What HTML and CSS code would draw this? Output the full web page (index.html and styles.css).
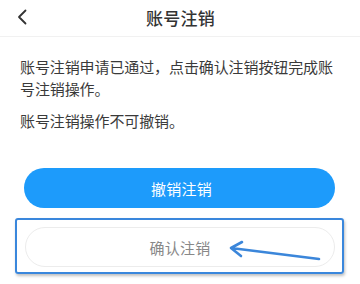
FILE: index.html
```html
<!DOCTYPE html>
<html lang="zh-CN">
<head>
<meta charset="utf-8">
<link rel="stylesheet" href="styles.css">
</head>
<body>
<div class="page">
  <header class="header">
    <svg class="back" width="10" height="16" viewBox="0 0 10 16"><path d="M8.5 1.5 L2 8 L8.5 14.5" fill="none" stroke="#333" stroke-width="1.8" stroke-linecap="round" stroke-linejoin="round"/></svg>
    <h1 class="title">账号注销</h1>
  </header>
  <main class="content">
    <p class="text">账号注销申请已通过，点击确认注销按钮完成账号注销操作。</p>
    <p class="text text-second">账号注销操作不可撤销。</p>
  </main>
  <div class="actions">
    <button class="btn btn-primary">撤销注销</button>
    <button class="btn btn-secondary">确认注销</button>
    <div class="highlight"></div>
    <svg class="arrow" width="100" height="24" viewBox="0 0 100 24">
      <path d="M90 19 L2 8 M13 2 L2 8 L12 16" fill="none" stroke="#3b86da" stroke-width="2.6" stroke-linecap="round" stroke-linejoin="round"/>
    </svg>
  </div>
</div>
</body>
</html>
```
FILE: styles.css
```css
html, body {
  margin: 0;
  padding: 0;
  background: #ffffff;
}
body {
  font-family: "Noto Sans CJK SC", "Noto Sans", sans-serif;
  color: #333333;
}
.page {
  width: 360px;
  height: 284px;
  overflow: hidden;
  position: relative;
}
.header {
  height: 36px;
  border-bottom: 1px solid #f1f1f1;
  display: flex;
  align-items: center;
  justify-content: center;
  position: relative;
}
.back {
  position: absolute;
  left: 17px;
  top: 9px;
}
.title {
  margin: 0;
  font-size: 17px;
  font-weight: 500;
  letter-spacing: 0.2px;
  color: #333333;
  line-height: 22px;
  padding-left: 1px;
}
.content {
  padding: 19px 20px 0 20px;
}
.text {
  margin: 0;
  font-size: 15px;
  line-height: 22px;
  letter-spacing: -0.1px;
  color: #3a3a3a;
}
.text-second {
  margin-top: 10px;
}
.actions {
  position: relative;
  padding: 36px 25px 0 24px;
  display: flex;
  flex-direction: column;
  gap: 19px;
}
.btn {
  height: 40px;
  border-radius: 20px;
  font-family: "Noto Sans CJK SC", "Noto Sans", sans-serif;
  font-size: 15px;
  letter-spacing: 0.3px;
  display: flex;
  align-items: center;
  justify-content: center;
  padding: 0;
}
.btn-primary {
  width: 311px;
  background: #1d9bfb;
  border: none;
  color: #ffffff;
  padding-left: 4px;
}
.btn-secondary {
  width: 310px;
  margin-left: 1px;
  background: #ffffff;
  border: 1px solid #ececec;
  color: #888888;
}
.highlight {
  position: absolute;
  left: 15px;
  top: 86px;
  width: 325px;
  height: 52px;
  border: 2px solid #3a87dc;
  border-radius: 3px;
  box-shadow: 1px 2px 3px rgba(0, 0, 0, 0.25);
}
.arrow {
  position: absolute;
  left: 229px;
  top: 108px;
}
```
